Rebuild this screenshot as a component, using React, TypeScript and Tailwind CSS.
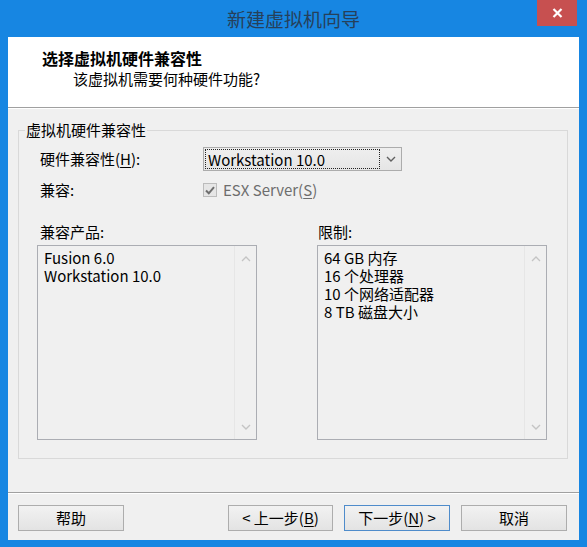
import React from "react";

function ChevronUp({ color = "#c4c4c4" }: { color?: string }) {
  return (
    <svg width="10" height="6" viewBox="0 0 10 6">
      <path d="M1 5 L5 1 L9 5" fill="none" stroke={color} strokeWidth="1.3" />
    </svg>
  );
}
function ChevronDown({ color = "#c4c4c4", w = 10, h = 6 }: { color?: string; w?: number; h?: number }) {
  return (
    <svg width={w} height={h} viewBox="0 0 10 6">
      <path d="M1 1 L5 5 L9 1" fill="none" stroke={color} strokeWidth="1.4" />
    </svg>
  );
}

function ListBox({ items }: { items: string[] }) {
  return (
    <div className="mt-[5px] h-[195px] border border-[#abadb3] bg-[#f0f0f0] flex">
      <div className="flex-1 pl-[6px] pt-[3px] leading-[18px] text-[15px]">
        {items.map((t) => (
          <div key={t} className="whitespace-nowrap">
            {t}
          </div>
        ))}
      </div>
      <div className="w-[22px] border-l border-[#e6e6e6] flex flex-col items-center justify-between pt-[10px] pb-[9px]">
        <ChevronUp />
        <ChevronDown />
      </div>
    </div>
  );
}

function Btn({
  children,
  className = "",
  primary = false,
}: {
  children: React.ReactNode;
  className?: string;
  primary?: boolean;
}) {
  return (
    <div
      className={
        "h-[26px] flex items-center justify-center text-[15px] bg-gradient-to-b from-[#f2f2f2] to-[#e3e3e3] border " +
        (primary ? "border-[#4f8ccb]" : "border-[#adadad]") +
        " " +
        className
      }
    >
      {children}
    </div>
  );
}

export default function App() {
  return (
    <div className="w-[587px] h-[547px] bg-[#1786e2] flex flex-col font-['Noto_Sans_CJK_SC',sans-serif] text-black select-none">
      {/* Title bar */}
      <div className="relative h-[37px] flex items-center justify-center shrink-0">
        <span className="text-[19px] leading-none text-[#26405a]">新建虚拟机向导</span>
        <div className="absolute right-[10px] top-0 w-[40px] h-[26px] bg-[#c75050] flex items-center justify-center">
          <svg width="11" height="10" viewBox="0 0 11 10">
            <path d="M1.5 1 L9.5 9 M9.5 1 L1.5 9" stroke="#ffffff" strokeWidth="2.2" />
          </svg>
        </div>
      </div>

      {/* Client */}
      <div className="mx-[8px] h-[503px] bg-[#f0f0f0] flex flex-col shrink-0">
        {/* Header */}
        <div className="h-[70px] bg-white pl-[34px] pt-[11px] shrink-0">
          <div className="text-[16px] font-bold leading-[20px]">选择虚拟机硬件兼容性</div>
          <div className="ml-[31px] mt-[1px] text-[15px] leading-[20px]">该虚拟机需要何种硬件功能?</div>
        </div>
        <div className="h-px bg-[#a0a0a0] shrink-0" />
        <div className="h-px bg-white shrink-0" />

        {/* Body */}
        <div className="flex-1 pl-[10px] pr-[11px]">
          <fieldset className="mt-[13px] border border-[#d9d9d9] pb-[18px]">
            <legend className="ml-[6px] px-[1px] text-[15px] leading-[16px]">虚拟机硬件兼容性</legend>
            <div className="pl-[18px] text-[15px]">
              {/* Row 1 */}
              <div className="mt-[9px] h-[24px] flex items-center">
                <div className="w-[166px] pl-[3px] leading-[16px]">
                  硬件兼容性(<span className="underline underline-offset-2">H</span>):
                </div>
                <div className="w-[199px] h-[24px] border border-[#acacac] bg-gradient-to-b from-[#efefef] to-[#e5e5e5] flex items-center pl-px">
                  <div className="w-[175px] h-[20px] border border-dotted border-[#222] flex items-center pl-[2px] leading-none">
                    Workstation 10.0
                  </div>
                  <div className="flex-1 flex items-center justify-center">
                    <ChevronDown color="#606060" />
                  </div>
                </div>
              </div>
              {/* Row 2 */}
              <div className="mt-[11px] h-[16px] flex items-center">
                <div className="w-[166px] pl-[3px] leading-[16px]">兼容:</div>
                <div className="w-[14px] h-[14px] border border-[#bcbcbc] bg-[#e6e6e6] flex items-center justify-center">
                  <svg width="10" height="9" viewBox="0 0 10 9">
                    <path d="M1 4.5 L3.8 7.3 L9 1.2" fill="none" stroke="#6e6e6e" strokeWidth="2" />
                  </svg>
                </div>
                <div className="ml-[6px] text-[#6d6d6d] leading-[16px]">
                  ESX Server(<span className="underline underline-offset-2">S</span>)
                </div>
              </div>
              {/* Row 3 */}
              <div className="mt-[26px] flex">
                <div className="w-[220px]">
                  <div className="h-[16px] leading-[16px] pl-[3px]">兼容产品:</div>
                  <ListBox items={["Fusion 6.0", "Workstation 10.0"]} />
                </div>
                <div className="ml-[60px] w-[230px]">
                  <div className="h-[16px] leading-[16px] pl-[1px]">限制:</div>
                  <ListBox items={["64 GB 内存", "16 个处理器", "10 个网络适配器", "8 TB 磁盘大小"]} />
                </div>
              </div>
            </div>
          </fieldset>
        </div>

        {/* Footer */}
        <div className="h-[48px] shrink-0 flex flex-col">
          <div className="h-px bg-[#a0a0a0]" />
          <div className="h-px bg-white" />
          <div className="mt-[11px] flex pl-[10px] pr-[12px]">
            <Btn className="w-[106px]">帮助</Btn>
            <div className="flex-1" />
            <Btn className="w-[105px] mr-[11px]">
              &lt; 上一步(<span className="underline underline-offset-2">B</span>)
            </Btn>
            <Btn className="w-[106px] mr-[11px]" primary>
              下一步(<span className="underline underline-offset-2">N</span>) &gt;
            </Btn>
            <Btn className="w-[106px]">取消</Btn>
          </div>
        </div>
      </div>
    </div>
  );
}
